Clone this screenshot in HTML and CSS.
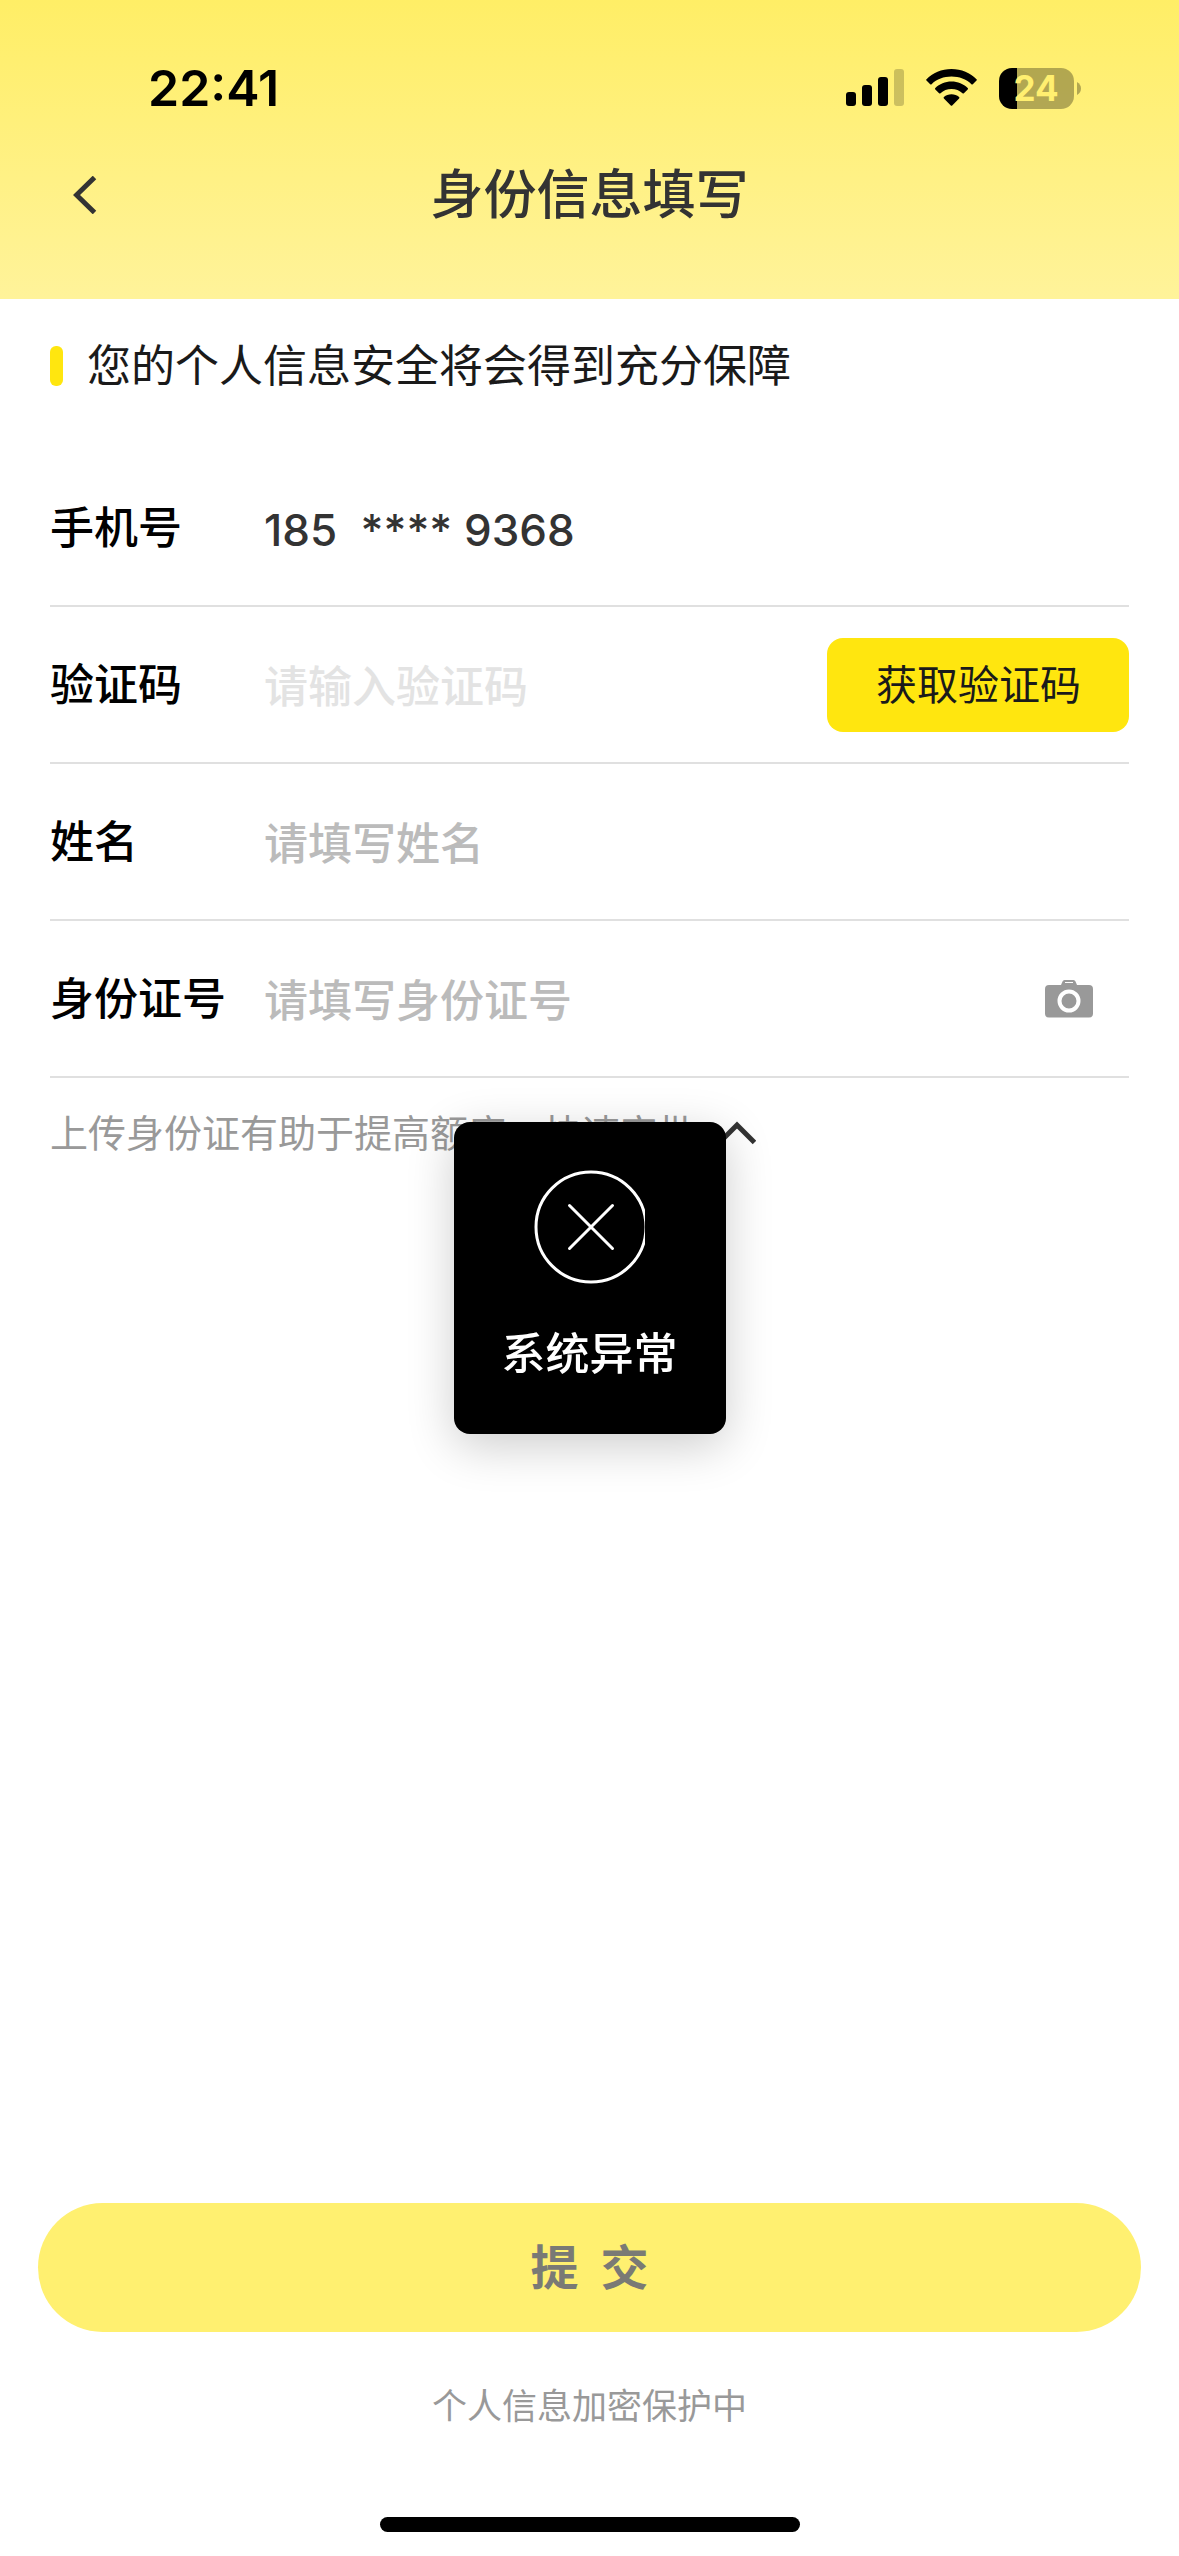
FILE: index.html
```html
<!DOCTYPE html>
<html lang="zh-CN">
<head>
<meta charset="utf-8">
<meta name="viewport" content="width=device-width, initial-scale=1">
<title>身份信息填写</title>
<link rel="stylesheet" href="styles.css">
</head>
<body class="page">
<header class="header">
  <div class="status">
    <time class="clock">22:41</time>
    <div class="indicators">
      <svg width="58" height="38" viewBox="0 0 58 38" aria-hidden="true">
        <rect x="0" y="23" width="10" height="14" rx="3"/>
        <rect x="16" y="16" width="10" height="21" rx="3"/>
        <rect x="32" y="8" width="10" height="29" rx="3"/>
        <rect x="48" y="0" width="10" height="37" rx="3" opacity=".2"/>
      </svg>
      <svg width="51" height="38" viewBox="0 0 51 38" aria-hidden="true">
        <path d="M25.500 0C35.400 0 44.400 3.900 50.500 10.200q.7.700 0 1.400L46.800 15.200q-.7.700-1.400 0C40.200 10.300 33.200 7.600 25.500 7.600S10.800 10.300 5.600 15.200q-.7.700-1.400 0L.5 11.600q-.7-.7 0-1.400C6.600 3.900 15.600 0 25.500 0Z"/>
        <path d="M25.500 12.600c6.300 0 12 2.400 16.200 6.500q.7.700 0 1.400L37.900 24.200q-.7.700-1.400 0C33.600 21.600 29.800 20 25.500 20s-8.100 1.600-11 4.200q-.7.700-1.400 0L9.300 20.500q-.7-.7 0-1.400C13.500 15 19.200 12.600 25.500 12.600Z"/>
        <path d="M25.500 25.300c2.900 0 5.500 1 7.600 2.700q.7.700 0 1.400L26.200 36.500q-.7.700-1.400 0L17.900 29.400q-.7-.7 0-1.400C20 26.300 22.600 25.300 25.500 25.300Z"/>
      </svg>
      <svg class="battery" width="82" height="41" viewBox="0 0 82 41" role="img" aria-label="电量 24%">
        <path class="battery-shell" d="M18 0H62A13 13 0 0 1 75 13V28A13 13 0 0 1 62 41H18Z"/>
        <path d="M18 0V41H13A13 13 0 0 1 0 28V13A13 13 0 0 1 13 0Z"/>
        <path class="battery-shell" d="M78 14q4 2.500 4 6.500t-4 6.500Z"/>
        <text class="battery-text" x="37" y="33" text-anchor="middle">24</text>
      </svg>
    </div>
  </div>
  <nav class="nav">
    <button class="icon-button back" type="button" aria-label="返回">
      <svg width="24" height="38" viewBox="0 0 24 38"><path class="stroke" d="M21.500 1.500 3.500 19l18 17.500"/></svg>
    </button>
    <h1 class="title">身份信息填写</h1>
  </nav>
</header>

<main class="content">
  <p class="notice">您的个人信息安全将会得到充分保障</p>
  <form class="form" id="identity">
    <div class="row">
      <label class="label" for="phone">手机号</label>
      <input class="field" id="phone" type="text" value="185  **** 9368" readonly>
    </div>
    <div class="row">
      <label class="label" for="code">验证码</label>
      <input class="field field-code" id="code" type="text" placeholder="请输入验证码">
      <button class="code-button" type="button">获取验证码</button>
    </div>
    <div class="row">
      <label class="label" for="name">姓名</label>
      <input class="field" id="name" type="text" placeholder="请填写姓名">
    </div>
    <div class="row">
      <label class="label" for="idno">身份证号</label>
      <input class="field" id="idno" type="text" placeholder="请填写身份证号">
      <button class="icon-button camera" type="button" aria-label="拍摄身份证">
        <svg width="48" height="38" viewBox="0 0 48 38">
          <path fill="#999" d="M4 5H16L17.500 1.500Q18 0 19.500 0H28.500Q30 0 30.500 1.500L32 5H44Q48 5 48 9V33.500Q48 37.500 44 37.500H4Q0 37.500 0 33.500V9Q0 5 4 5Z"/>
          <path stroke="#fff" d="M20 2.500H28"/>
          <circle cx="24" cy="21" r="9.500" fill="none" stroke="#fff" stroke-width="4"/>
        </svg>
      </button>
    </div>
  </form>
  <div class="hint">
    <span>上传身份证有助于提高额度，快速审批</span>
    <button class="icon-button" type="button" aria-label="收起">
      <svg width="38" height="24" viewBox="0 0 38 24"><path class="stroke" d="M1.500 21.500 19 4l17.500 17.500"/></svg>
    </button>
  </div>
</main>

<footer class="footer">
  <button class="submit" type="submit" form="identity" disabled>提&nbsp;&nbsp;交</button>
  <p class="secure">个人信息加密保护中</p>
  <div class="home-bar"></div>
</footer>

<div class="toast" role="alert">
  <svg width="111" height="114" viewBox="0 0 111 114" aria-hidden="true">
    <g fill="none" stroke="#fff" stroke-width="3" stroke-linecap="round">
      <circle cx="57" cy="57" r="55"/>
      <path d="M35.500 35.500l43 43M78.500 35.500l-43 43"/>
    </g>
  </svg>
  <span>系统异常</span>
</div>
</body>
</html>
```
FILE: styles.css
```css
* {
  box-sizing: border-box;
}

.page {
  margin: 0;
  min-height: 100vh;
  display: flex;
  flex-direction: column;
  background: #fff;
  color: #000;
  font-family: "Inter", "Noto Sans CJK SC", sans-serif;
  font-size: 44px;
}

button,
input {
  border: 0;
  padding: 0;
  background: none;
  color: inherit;
  font: inherit;
}

.icon-button {
  display: flex;
}

.stroke {
  fill: none;
  stroke: #333;
  stroke-width: 5;
}

/* Header */
.header {
  padding-bottom: 49px;
  background: linear-gradient(#ffee66, #fff39a);
}

.status {
  height: 140px;
  padding: 36px 98px 0 148px;
  display: flex;
  align-items: center;
  justify-content: space-between;
}

.clock {
  font-size: 50px;
  font-weight: 600;
  line-height: 60px;
}

.indicators {
  display: flex;
  align-items: center;
  gap: 22px;
}

.battery-shell {
  opacity: 0.3;
}

.battery-text {
  fill: #ffef70;
  font-size: 35px;
  font-weight: 700;
}

.nav {
  height: 110px;
  padding: 0 73px;
  display: grid;
  grid-template-columns: 1fr auto 1fr;
  align-items: center;
}

.back {
  justify-self: start;
}

.title {
  margin: 0;
  color: #333;
  font-size: 53px;
  font-weight: 500;
  line-height: 72px;
}

/* Content */
.content {
  padding: 0 50px;
}

.notice {
  margin: 36px 0 53px;
  display: flex;
  align-items: center;
  gap: 24px;
  color: #1a1a1a;
  line-height: 62px;
}

.notice::before {
  content: "";
  width: 13px;
  height: 40px;
  border-radius: 6px;
  background: #ffe60f;
}

.row {
  height: 157px;
  display: flex;
  align-items: center;
  border-bottom: 2px solid #e0e0e0;
}

.label {
  flex: none;
  width: 214px;
  font-weight: 500;
  line-height: 62px;
}

.field {
  flex: 1;
  min-width: 0;
  height: 80px;
  padding-top: 4px;
  color: #333;
  font-weight: 500;
  outline: 0;
}

.field::placeholder {
  color: #bbb;
  opacity: 1;
}

.field-code::placeholder {
  color: #e3e3e3;
}

.code-button {
  padding: 0 48px 0 49px;
  height: 94px;
  border-radius: 16px;
  background: #ffe60f;
  color: #1a1a1a;
  font-size: 41px;
  line-height: 62px;
}

.camera {
  margin-right: 36px;
}

.hint {
  margin-top: 28px;
  display: flex;
  align-items: center;
  gap: 22px;
  color: #999;
  font-size: 38px;
  line-height: 54px;
}

/* Footer */
.footer {
  margin-top: auto;
  padding: 0 38px 24px;
  display: flex;
  flex-direction: column;
}

.submit {
  height: 129px;
  padding-bottom: 8px;
  border-radius: 65px;
  background: #fff070;
  color: #7a7a75;
  font-family: "Noto Sans CJK SC", sans-serif;
  font-size: 48px;
  font-weight: 700;
}

.secure {
  margin: 49px 0 86px;
  color: #999;
  font-size: 35px;
  line-height: 50px;
  text-align: center;
}

.home-bar {
  align-self: center;
  width: 420px;
  height: 15px;
  border-radius: 8px;
  background: #000;
}

/* Toast */
.toast {
  position: fixed;
  top: 50%;
  left: 50%;
  transform: translate(-50%, -50%);
  padding: 48px;
  display: flex;
  flex-direction: column;
  align-items: center;
  gap: 38px;
  border-radius: 16px;
  background: #000;
  box-shadow: 0 12px 48px rgba(0, 0, 0, 0.2);
  color: #fff;
  font-weight: 500;
  line-height: 64px;
  white-space: nowrap;
}
```
